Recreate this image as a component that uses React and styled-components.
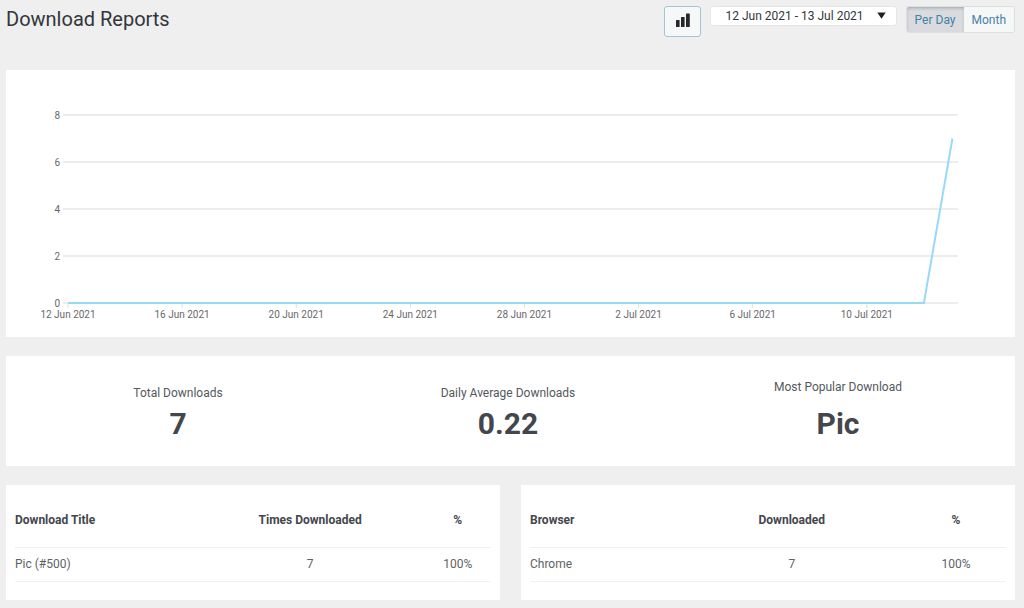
import { useState } from "react";
import styled, { createGlobalStyle } from "styled-components";

const GlobalStyle = createGlobalStyle`
  *,
  *::before,
  *::after {
    box-sizing: border-box;
  }

  body {
    margin: 0;
    background: #efefef;
    color: #43464c;
    font-family: Roboto, "Liberation Sans", sans-serif;
    font-size: 12px;
    line-height: 18px;
  }
`;

const Page = styled.main`
  display: flex;
  flex-direction: column;
  gap: 19px;
  padding: 6px 9px 8px 6px;
`;

const Header = styled.header`
  display: flex;
  align-items: flex-start;
  justify-content: space-between;
  min-height: 45px;
`;

const Title = styled.h1`
  margin: 0;
  color: #32363a;
  font-size: 20px;
  font-weight: 400;
  line-height: 26px;
`;

const Toolbar = styled.div`
  display: flex;
  align-items: flex-start;
  gap: 9px;
`;

const ChartButton = styled.button`
  display: flex;
  justify-content: center;
  width: 37px;
  height: 31px;
  padding: 6px 0 0;
  border: 1px solid #a3c4d6;
  border-radius: 3px;
  background: #f6f8f8;
  color: #26282c;
  cursor: pointer;
`;

const DateRange = styled.button`
  display: flex;
  align-items: center;
  justify-content: space-between;
  gap: 13px;
  height: 20px;
  padding: 0 10px 1px 14px;
  border: 1px solid #e6e6e6;
  border-radius: 3px;
  background: #ffffff;
  color: #32363a;
  font-family: inherit;
  font-size: 12px;
  cursor: pointer;
`;

const ButtonGroup = styled.div`
  display: flex;
  height: 27px;
  border: 1px solid #dde0e1;
  border-radius: 3px;
  overflow: hidden;
`;

const PeriodButton = styled.button`
  padding: 0 8px;
  border: none;
  background: ${(props) => (props.$active ? "#d9dbde" : "#f6f8f8")};
  box-shadow: ${(props) =>
    props.$active ? "inset 0 2px 4px -2px #85898e" : "none"};
  color: #4581a9;
  font-family: inherit;
  font-size: 12px;
  cursor: pointer;
`;

const Panel = styled.section`
  background: #ffffff;
`;

const Chart = styled.svg`
  display: block;
  width: 100%;
  height: auto;
`;

const AxisLabel = styled.text`
  fill: #66696b;
  font-size: 10px;
  text-anchor: ${(props) => props.$anchor};
`;

const Stats = styled(Panel)`
  display: grid;
  grid-template-columns: repeat(3, 1fr);
  align-items: end;
  padding: 22px 12px 24px 7px;
`;

const Stat = styled.div`
  display: flex;
  flex-direction: column;
  align-items: center;
  gap: ${(props) => (props.$spaced ? "10px" : "4px")};
`;

const StatLabel = styled.span`
  color: #54585d;
`;

const StatValue = styled.strong`
  font-size: 30px;
  font-weight: 700;
  line-height: 36px;
`;

const Tables = styled.div`
  display: grid;
  grid-template-columns: 1fr 1fr;
  gap: 21px;
`;

const TablePanel = styled(Panel)`
  padding: 9px 9px 18px;
`;

const Table = styled.table`
  width: 100%;
  table-layout: fixed;
  border-collapse: collapse;
`;

const HeadCell = styled.th`
  width: ${(props) => props.$width};
  height: 53px;
  padding: 0;
  border-bottom: 1px solid #f1f1f1;
  font-weight: 700;
  text-align: center;

  &:first-child {
    text-align: left;
  }
`;

const Cell = styled.td`
  height: 34px;
  padding: 0;
  border-bottom: 1px solid #f1f1f1;
  color: #5e6266;
  text-align: center;

  &:first-child {
    text-align: left;
  }
`;

const LEFT = 62;
const BASELINE = 233;
const DAY_WIDTH = 28.53;
const UNIT_HEIGHT = 23.5;

// one value for each day, 12 Jun - 13 Jul
const downloads = [...Array(31).fill(0), 7];

const xLabels = [
  "12 Jun 2021",
  "16 Jun 2021",
  "20 Jun 2021",
  "24 Jun 2021",
  "28 Jun 2021",
  "2 Jul 2021",
  "6 Jul 2021",
  "10 Jul 2021",
];

const stats = [
  { label: "Total Downloads", value: "7" },
  { label: "Daily Average Downloads", value: "0.22" },
  { label: "Most Popular Download", value: "Pic", spaced: true },
];

function DownloadsChart() {
  const points = downloads
    .map((n, i) => `${LEFT + i * DAY_WIDTH},${BASELINE - n * UNIT_HEIGHT}`)
    .join(" ");

  return (
    <Chart viewBox="0 0 1009 267" role="img" aria-label="Downloads per day">
      {[0, 2, 4, 6, 8].map((n) => {
        const y = BASELINE - n * UNIT_HEIGHT;
        return (
          <g key={n}>
            <line x1="57" x2="952" y1={y} y2={y} stroke="#e6e8e8" strokeWidth="1.6" />
            <AxisLabel x="54" y={y + 4} $anchor="end">
              {n}
            </AxisLabel>
          </g>
        );
      })}
      {xLabels.map((label, i) => {
        const x = LEFT + i * 4 * DAY_WIDTH;
        return (
          <g key={label}>
            <line x1={x} x2={x} y1={BASELINE} y2={BASELINE + 5} stroke="#dfe1e1" />
            <AxisLabel x={x} y={BASELINE + 15} $anchor="middle">
              {label}
            </AxisLabel>
          </g>
        );
      })}
      <polyline points={points} fill="none" stroke="#99d9f8" strokeWidth="2" />
    </Chart>
  );
}

function ReportTable({ columns, widths, row }) {
  return (
    <TablePanel>
      <Table>
        <thead>
          <tr>
            {columns.map((column, i) => (
              <HeadCell key={column} scope="col" $width={widths[i]}>
                {column}
              </HeadCell>
            ))}
          </tr>
        </thead>
        <tbody>
          <tr>
            {row.map((value, i) => (
              <Cell key={columns[i]}>{value}</Cell>
            ))}
          </tr>
        </tbody>
      </Table>
    </TablePanel>
  );
}

function App() {
  const [period, setPeriod] = useState("Per Day");

  return (
    <>
      <GlobalStyle />
      <Page>
        <Header>
          <Title>Download Reports</Title>
          <Toolbar>
            <ChartButton type="button" aria-label="Toggle chart">
              <svg width="14" height="14" viewBox="0 0 14 14" fill="currentColor">
                <rect x="0" y="7" width="3.6" height="7" rx="0.6" />
                <rect x="5" y="4" width="3.6" height="10" rx="0.6" />
                <rect x="10" y="0.5" width="3.8" height="13.5" rx="0.6" />
              </svg>
            </ChartButton>
            <DateRange type="button" aria-haspopup="dialog">
              12 Jun 2021 - 13 Jul 2021
              <svg width="9" height="7" viewBox="0 0 9 7" fill="#1f2124">
                <path d="M0.3 0.5h8.4L4.5 6.8z" />
              </svg>
            </DateRange>
            <ButtonGroup>
              {["Per Day", "Month"].map((name) => (
                <PeriodButton
                  key={name}
                  type="button"
                  $active={period === name}
                  aria-pressed={period === name}
                  onClick={() => setPeriod(name)}
                >
                  {name}
                </PeriodButton>
              ))}
            </ButtonGroup>
          </Toolbar>
        </Header>

        <Panel>
          <DownloadsChart />
        </Panel>

        <Stats>
          {stats.map((stat) => (
            <Stat key={stat.label} $spaced={stat.spaced}>
              <StatLabel>{stat.label}</StatLabel>
              <StatValue>{stat.value}</StatValue>
            </Stat>
          ))}
        </Stats>

        <Tables>
          <ReportTable
            columns={["Download Title", "Times Downloaded", "%"]}
            widths={["38%", "48%", "14%"]}
            row={["Pic (#500)", "7", "100%"]}
          />
          <ReportTable
            columns={["Browser", "Downloaded", "%"]}
            widths={["31%", "48%", "21%"]}
            row={["Chrome", "7", "100%"]}
          />
        </Tables>
      </Page>
    </>
  );
}

export default App;
